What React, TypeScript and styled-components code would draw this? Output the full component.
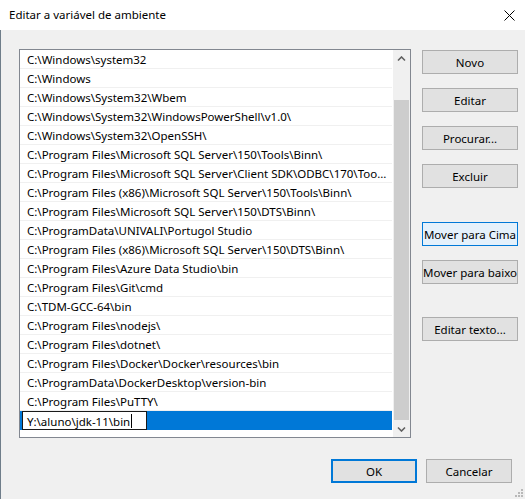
import * as React from 'react';
import styled, { createGlobalStyle } from 'styled-components';

const GlobalStyle = createGlobalStyle`
	html,
	body {
		margin: 0;
		padding: 0;
		width: 525px;
		height: 499px;
		overflow: hidden;
		background: #f0f0f0;
	}
	* {
		box-sizing: border-box;
	}
`;

const PATHS = [
	'C:\\Windows\\system32',
	'C:\\Windows',
	'C:\\Windows\\System32\\Wbem',
	'C:\\Windows\\System32\\WindowsPowerShell\\v1.0\\',
	'C:\\Windows\\System32\\OpenSSH\\',
	'C:\\Program Files\\Microsoft SQL Server\\150\\Tools\\Binn\\',
	'C:\\Program Files\\Microsoft SQL Server\\Client SDK\\ODBC\\170\\Tools\\Binn\\',
	'C:\\Program Files (x86)\\Microsoft SQL Server\\150\\Tools\\Binn\\',
	'C:\\Program Files\\Microsoft SQL Server\\150\\DTS\\Binn\\',
	'C:\\ProgramData\\UNIVALI\\Portugol Studio',
	'C:\\Program Files (x86)\\Microsoft SQL Server\\150\\DTS\\Binn\\',
	'C:\\Program Files\\Azure Data Studio\\bin',
	'C:\\Program Files\\Git\\cmd',
	'C:\\TDM-GCC-64\\bin',
	'C:\\Program Files\\nodejs\\',
	'C:\\Program Files\\dotnet\\',
	'C:\\Program Files\\Docker\\Docker\\resources\\bin',
	'C:\\ProgramData\\DockerDesktop\\version-bin',
	'C:\\Program Files\\PuTTY\\',
];

const SIDE_BUTTONS = [
	{ label: 'Novo', space: 0 },
	{ label: 'Editar', space: 0 },
	{ label: 'Procurar...', space: 0 },
	{ label: 'Excluir', space: 0 },
	{ label: 'Mover para Cima', space: 20, focused: true },
	{ label: 'Mover para baixo', space: 0 },
	{ label: 'Editar texto...', space: 19 },
];

const Window = styled.div`
	width: 525px;
	height: 499px;
	display: flex;
	flex-direction: column;
	font-family: 'Noto Sans', 'Open Sans', sans-serif;
	font-size: 11.5px;
	color: #000;
`;

const TitleBar = styled.div`
	height: 30px;
	flex: none;
	background: #fff;
	display: flex;
	align-items: center;
	justify-content: space-between;
	padding: 0 9px 0 9px;
`;

const Title = styled.span`
	line-height: 16px;
`;

const CloseButton = styled.div`
	width: 12px;
	height: 12px;
	display: flex;
	align-items: center;
	justify-content: center;
	margin-right: 1px;
`;

const Body = styled.div`
	position: relative;
	flex: 1;
	background: #f0f0f0;
	border-left: 1px solid #6f7d8a;
	padding: 19px 13px 0 18px;
	display: flex;
	flex-direction: column;
`;

const Main = styled.div`
	display: grid;
	grid-template-columns: 392px 96px;
	column-gap: 11px;
	height: 389px;
`;

const ListBox = styled.div`
	border: 1px solid #828790;
	background: #fff;
	display: flex;
	overflow: hidden;
`;

const Rows = styled.div`
	flex: 1;
	min-width: 0;
	display: flex;
	flex-direction: column;
`;

const Row = styled.div`
	height: 19px;
	line-height: 16px;
	padding: 2px 4px 0 7px;
	border-bottom: 1px solid #f0f0f0;
	margin-right: 1px;
	white-space: nowrap;
	overflow: hidden;
	text-overflow: ellipsis;
`;

const EditRow = styled.div`
	height: 19px;
	background: #0078d7;
	margin-right: 1px;
	padding-left: 2px;
	display: flex;
`;

const EditBox = styled.div`
	width: 125px;
	height: 19px;
	background: #fff;
	border: 1px solid #1a1a1a;
	padding: 1px 0 0 4px;
	white-space: nowrap;
	display: flex;
	align-items: center;
`;

const Caret = styled.span`
	display: inline-block;
	width: 1px;
	height: 14px;
	background: #000;
	margin-left: 1px;
`;

const ScrollBar = styled.div`
	width: 17px;
	flex: none;
	background: #f0f0f0;
	display: flex;
	flex-direction: column;
`;

const ScrollArrow = styled.div`
	height: 17px;
	flex: none;
	display: flex;
	align-items: center;
	justify-content: center;
`;

const Track = styled.div`
	flex: 1;
	display: flex;
	flex-direction: column;
	padding: 0 1px;
`;

const Thumb = styled.div<{ $offset: number }>`
	margin-top: ${(p) => p.$offset}px;
	flex: 1;
	background: #cdcdcd;
`;

const SideButtons = styled.div`
	display: flex;
	flex-direction: column;
	gap: 14px;
	padding-top: 1px;
`;

const Button = styled.div<{ $focused?: boolean; $space?: number }>`
	height: 24px;
	margin-top: ${(p) => p.$space || 0}px;
	display: flex;
	align-items: center;
	justify-content: center;
	white-space: nowrap;
	background: ${(p) => (p.$focused ? '#e5f1fb' : '#e1e1e1')};
	border: 1px solid ${(p) => (p.$focused ? '#0078d7' : '#adadad')};
`;

const Footer = styled.div`
	margin-top: 21px;
	display: flex;
	justify-content: flex-end;
	gap: 9px;
`;

const DialogButton = styled.div<{ $default?: boolean }>`
	width: 86px;
	height: 24px;
	display: flex;
	align-items: center;
	justify-content: center;
	background: #e1e1e1;
	border: ${(p) => (p.$default ? '2px solid #0078d7' : '1px solid #adadad')};
`;

const Grip = styled.svg`
	position: absolute;
	right: 1px;
	bottom: 1px;
`;

const Chevron = ({ down }: { down?: boolean }) => (
	<svg width="9" height="6" viewBox="0 0 9 6">
		<path
			d={down ? 'M1 1.5 L4.5 5 L8 1.5' : 'M1 4.5 L4.5 1 L8 4.5'}
			fill="none"
			stroke="#606060"
			strokeWidth="1.6"
		/>
	</svg>
);

export default function App() {
	return (
		<Window>
			<GlobalStyle />
			<TitleBar>
				<Title>Editar a variável de ambiente</Title>
				<CloseButton>
					<svg width="11" height="11" viewBox="0 0 11 11">
						<path d="M0.5 0.5 L10.5 10.5 M10.5 0.5 L0.5 10.5" stroke="#000" strokeWidth="1" />
					</svg>
				</CloseButton>
			</TitleBar>
			<Body>
				<Main>
					<ListBox>
						<Rows>
							{PATHS.map((path, index) => (
								<Row key={index}>{path}</Row>
							))}
							<EditRow>
								<EditBox>
									Y:\aluno\jdk-11\bin
									<Caret />
								</EditBox>
							</EditRow>
						</Rows>
						<ScrollBar>
							<ScrollArrow>
								<Chevron />
							</ScrollArrow>
							<Track>
								<Thumb $offset={33} />
							</Track>
							<ScrollArrow>
								<Chevron down />
							</ScrollArrow>
						</ScrollBar>
					</ListBox>
					<SideButtons>
						{SIDE_BUTTONS.map(({ label, space, focused }) => (
							<Button key={label} $space={space} $focused={focused}>
								{label}
							</Button>
						))}
					</SideButtons>
				</Main>
				<Footer>
					<DialogButton $default>OK</DialogButton>
					<DialogButton>Cancelar</DialogButton>
				</Footer>
				<Grip width="9" height="9" viewBox="0 0 9 9">
					<g fill="#b8b8b8">
						<rect x="6" y="0" width="2" height="2" />
						<rect x="3" y="3" width="2" height="2" />
						<rect x="6" y="3" width="2" height="2" />
						<rect x="0" y="6" width="2" height="2" />
						<rect x="3" y="6" width="2" height="2" />
						<rect x="6" y="6" width="2" height="2" />
					</g>
				</Grip>
			</Body>
		</Window>
	);
}
